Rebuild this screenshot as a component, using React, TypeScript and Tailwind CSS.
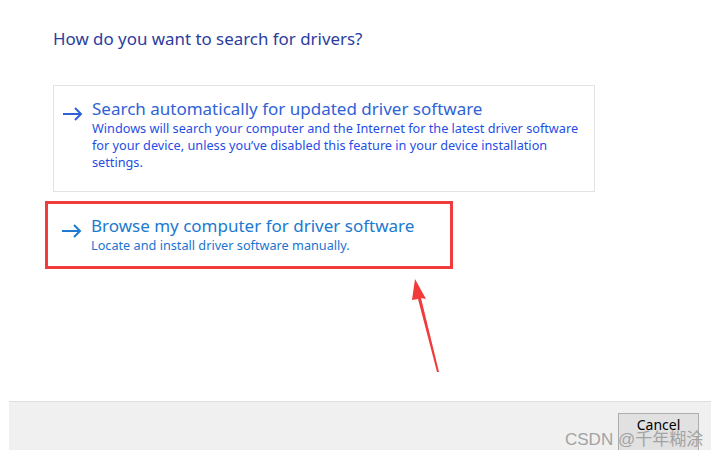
import React from "react";

const ui = { fontFamily: '"Noto Sans", "Open Sans", sans-serif' };

function Arrow({ color }: { color: string }) {
  return (
    <svg width="20" height="14" viewBox="0 0 20 14" fill="none" stroke={color} strokeWidth="2">
      <path d="M0 7h18M12 1l6 6-6 6" />
    </svg>
  );
}

function Option({ title, lines, tone }: { title: string; lines: string[]; tone: "blue" | "sky" }) {
  const head = tone === "blue" ? "text-[#2e62d6]" : "text-[#2079d0]";
  const body = tone === "blue" ? "text-[#1f4ee6]" : "text-[#1b74d0]";
  return (
    <div className="flex">
      <div className="w-[38px] pl-[9px] pt-[9px]">
        <Arrow color={tone === "blue" ? "#2e62d6" : "#2079d0"} />
      </div>
      <div>
        <div className={`text-[17px] leading-[22px] ${head}`}>{title}</div>
        <div className={`text-[12.7px] leading-[17px] ${body}`}>
          {lines.map((l) => (
            <div key={l}>{l}</div>
          ))}
        </div>
      </div>
    </div>
  );
}

export default function App() {
  return (
    <div className="relative w-[720px] h-[459px] bg-white overflow-hidden flex flex-col" style={ui}>
      <div className="pl-[53px] pt-[28px]">
        <div className="text-[16.9px] leading-[22px] text-[#2b3d9d]">How do you want to search for drivers?</div>

        <div className="mt-[35px] w-[542px] h-[107px] border border-[#e3e3e3] pt-[12px]">
          <Option
            tone="blue"
            title="Search automatically for updated driver software"
            lines={[
              "Windows will search your computer and the Internet for the latest driver software",
              "for your device, unless you\u2019ve disabled this feature in your device installation",
              "settings.",
            ]}
          />
        </div>

        <div className="mt-[9px] -ml-[8px] w-[408px] h-[68px] border-[3px] border-[#f03c3c] pl-[5px] pt-[11px]">
          <Option tone="sky" title="Browse my computer for driver software" lines={["Locate and install driver software manually."]} />
        </div>
      </div>

      <div className="mt-auto mb-[9px] mx-[9px] h-[49px] bg-[#f0f0f0] border-t border-[#dedede] overflow-hidden flex justify-end pr-[12px] pt-[11px]">
        <button className="w-[81px] h-[40px] border border-[#adadad] bg-[#e1e1e1] text-[14px] leading-[20px] text-black flex justify-center pt-[1px]" style={{ fontFamily: '"Noto Sans", sans-serif' }}>
          Cancel
        </button>
      </div>

      {/* annotation arrow */}
      <svg className="absolute left-[400px] top-[272px]" width="50" height="105" viewBox="0 0 50 105">
        <polygon points="15,7 26,27 21,26 39,100 37,100 18,27 12,28" fill="#f23a3a" />
      </svg>

      {/* watermark */}
      <div
        className="absolute left-[565px] top-[429px] text-[17px] leading-[22px] text-[#a3a3a3]"
        style={{ fontFamily: '"Liberation Sans", "Noto Sans CJK SC", sans-serif' }}
      >
        CSDN @千年糊涂
      </div>
    </div>
  );
}
